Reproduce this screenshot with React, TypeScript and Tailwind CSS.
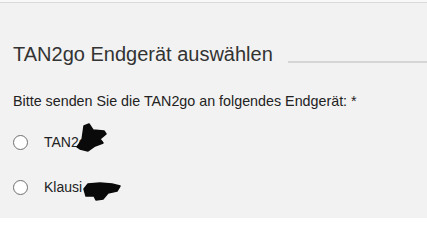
import React from "react";

function Radio({ label, blob }: { label: string; blob: React.ReactNode }) {
  return (
    <div className="relative flex items-center h-[16px]">
      <span className="w-[15px] h-[15px] rounded-full border border-[#6f6f6f] bg-white shrink-0" />
      <span className="ml-[16px] text-[14px] leading-[16px] text-[#222]">{label}</span>
      {blob}
    </div>
  );
}

export default function App() {
  return (
    <div
      className="w-[427px] h-[218px] bg-[#f2f2f2] overflow-hidden relative"
      style={{ fontFamily: '"Liberation Sans", Arial, sans-serif' }}
    >
      <div className="h-[2px] bg-[#f8f8f8]" />
      <div className="h-[1px] bg-[#d9d9d9]" />
      <div className="pl-[13px] pt-[39px]">
        <div className="flex items-end">
          <h2 className="text-[20px] leading-[24px] text-[#333] font-normal whitespace-nowrap">
            TAN2go Endgerät auswählen
          </h2>
          <div className="flex-1 ml-[15px] mb-[3px] h-[2px] bg-[#d6d6d6]" />
        </div>
        <p className="mt-[27px] text-[14.3px] leading-[16px] text-[#222] whitespace-nowrap">
          Bitte senden Sie die TAN2go an folgendes Endgerät: *
        </p>
        <div className="mt-[25px] flex flex-col gap-[29px]">
          <Radio
            label="TAN2go"
            blob={
              <svg className="absolute left-[-13px] top-[-134px]" width="140" height="220" viewBox="0 0 140 220">
                <path
                  d="M84 126 L89 124 L93 130 L104 131 L106 134 L100 139 L103 143 L95 146 L88 151 L80 149 L77 147 L82 140 L83 133 Z"
                  fill="#0a0a0a"
                  stroke="#0a0a0a"
                  strokeWidth="1.5"
                  strokeLinejoin="round"
                />
              </svg>
            }
          />
          <Radio
            label="Klausi"
            blob={
              <svg className="absolute left-[-13px] top-[-179px]" width="140" height="220" viewBox="0 0 140 220">
                <path
                  d="M84 189 L88 184 L100 183 L112 184 L120 186 L117 191 L108 193 L103 199 L96 200 L94 196 L86 196 Z"
                  fill="#0a0a0a"
                  stroke="#0a0a0a"
                  strokeWidth="1.5"
                  strokeLinejoin="round"
                />
              </svg>
            }
          />
        </div>
      </div>
    </div>
  );
}
